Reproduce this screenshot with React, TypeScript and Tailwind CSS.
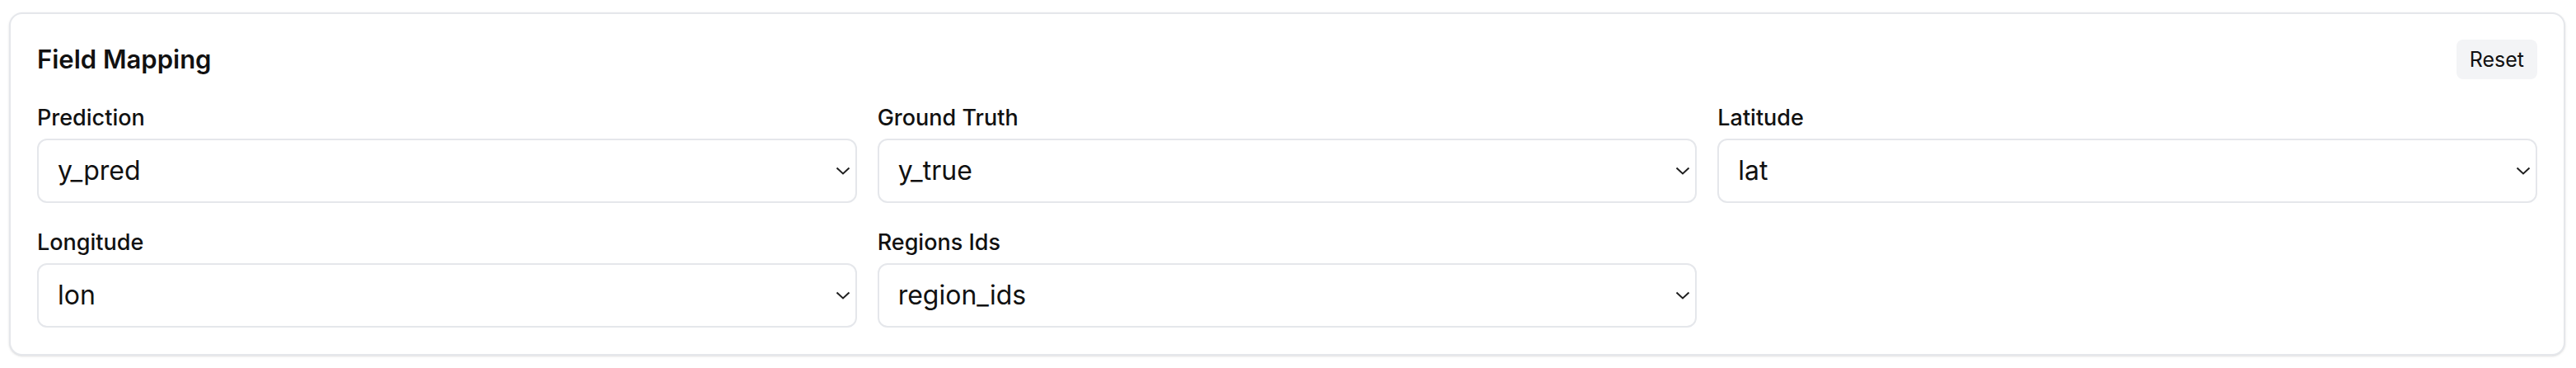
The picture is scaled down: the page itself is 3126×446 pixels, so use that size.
import React, { useState } from 'react';

const defaults: Record<string, string> = {
  prediction: 'y_pred',
  groundTruth: 'y_true',
  latitude: 'lat',
  longitude: 'lon',
  regionIds: 'region_ids',
};

const fields = [
  { key: 'prediction', label: 'Prediction' },
  { key: 'groundTruth', label: 'Ground Truth' },
  { key: 'latitude', label: 'Latitude' },
  { key: 'longitude', label: 'Longitude' },
  { key: 'regionIds', label: 'Regions Ids' },
];

const columns = ['y_pred', 'y_true', 'lat', 'lon', 'region_ids'];

const Chevron: React.FC = () => (
  <svg
    className="pointer-events-none absolute right-[8px] top-1/2 -translate-y-1/2 w-[18px] h-[10px]"
    viewBox="0 0 18 10"
    fill="none"
    stroke="#1f1f1f"
    strokeWidth={2}
  >
    <path d="M1.5 1.5L9 8.5L16.5 1.5" />
  </svg>
);

const App: React.FC = () => {
  const [mapping, setMapping] = useState<Record<string, string>>(defaults);

  return (
    <div
      className="bg-white pl-[11px] pr-[13px] pt-[15px] pb-[15px]"
      style={{ fontFamily: 'Inter, "Liberation Sans", sans-serif' }}
    >
      <div className="rounded-[16px] border-2 border-[#e5e7eb] bg-white shadow-sm px-[32px] pt-[31px] pb-[32px]">
        {/* Header */}
        <div className="flex items-center justify-between mb-[32px]">
          <h2 className="text-[31px] leading-[40px] font-semibold text-[#111]">Field Mapping</h2>
          <button
            onClick={() => setMapping(defaults)}
            className="h-[48px] px-[16px] rounded-[8px] bg-[#f3f4f6] text-[25px] leading-[32px] text-[#111]"
          >
            Reset
          </button>
        </div>

        {/* Fields */}
        <div className="grid grid-cols-3 gap-x-[25px] gap-y-[33px]">
          {fields.map((f) => (
            <div key={f.key} className="flex flex-col">
              <label className="text-[27px] leading-[30px] font-medium text-[#111] mb-[10px]">
                {f.label}
              </label>
              <div className="relative">
                <select
                  value={mapping[f.key]}
                  onChange={(e) => setMapping({ ...mapping, [f.key]: e.target.value })}
                  className="w-full h-[78px] appearance-none rounded-[12px] border-2 border-[#e5e7eb] bg-white pl-[23px] pr-[40px] text-[32px] text-[#111] outline-none"
                >
                  {columns.map((c) => (
                    <option key={c} value={c}>
                      {c}
                    </option>
                  ))}
                </select>
                <Chevron />
              </div>
            </div>
          ))}
        </div>
      </div>
    </div>
  );
};

export default App;
